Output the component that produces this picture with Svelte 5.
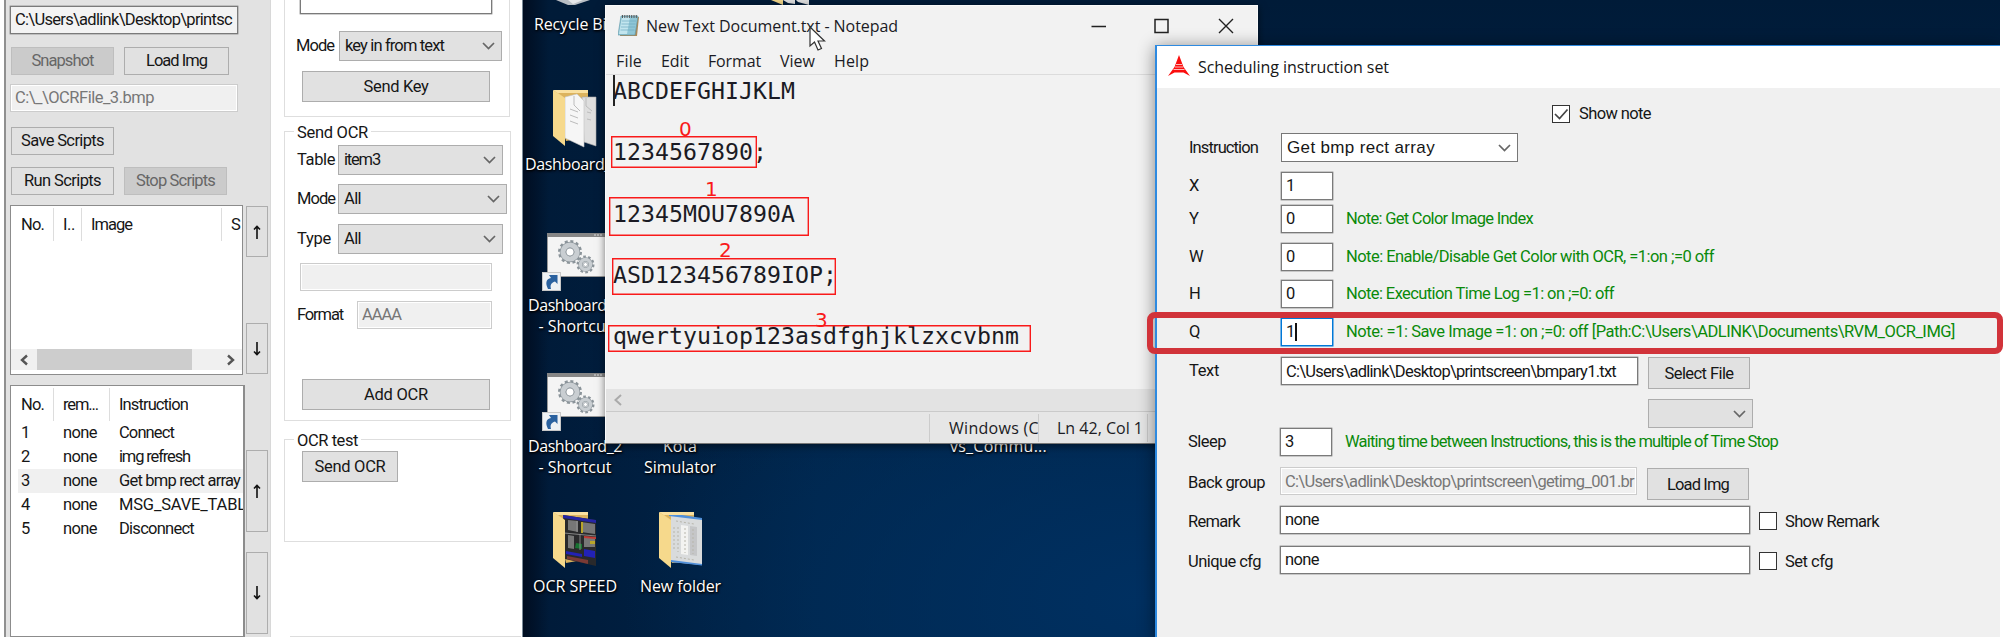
<script>
  // Spreads letter spacing so a caption takes up exactly the given width.
  function fit(node, width) {
    if (!width) return;
    const natural = node.getBoundingClientRect().width;
    node.style.letterSpacing = `${(width - natural) / node.textContent.length}px`;
  }

  const steps = [
    { name: 'Connect', w: 55 },
    { name: 'img refresh', w: 71 },
    { name: 'Get bmp rect array', w: 121 },
    { name: 'MSG_SAVE_TABL', w: 127 },
    { name: 'Disconnect', w: 75 }
  ];

  const params = [
    { key: 'X', value: '1', note: '', w: 0 },
    { key: 'Y', value: '0', note: 'Note: Get Color Image Index', w: 187 },
    { key: 'W', value: '0', note: 'Note: Enable/Disable Get Color with OCR, =1:on ;=0 off', w: 368 },
    { key: 'H', value: '0', note: 'Note: Execution Time Log =1: on ;=0: off', w: 268 },
    {
      key: 'Q',
      value: '1',
      note: 'Note: =1: Save Image =1: on ;=0: off [Path:C:\\Users\\ADLINK\\Documents\\RVM_OCR_IMG]',
      w: 609
    }
  ];

  const lines = [
    { text: 'ABCDEFGHIJKLM', w: 182 },
    { text: '1234567890;', w: 154 },
    { text: '12345MOU7890A', w: 182 },
    { text: 'ASD123456789IOP;', w: 224 },
    { text: 'qwertyuiop123asdfghjklzxcvbnm', w: 406 }
  ];
</script>

{#snippet t(text, w)}<span class="t" use:fit={w}>{text}</span>{/snippet}

{#snippet chevron()}
  <svg class="chev" width="13" height="8" viewBox="0 0 13 8"><path d="M1 1 L6.5 6.5 L12 1" fill="none" stroke="#666" stroke-width="1.7" /></svg>
{/snippet}

{#snippet combo(text, w, cls)}
  <div class="combo {cls}">{@render t(text, w)}{@render chevron()}</div>
{/snippet}

{#snippet arrow(cls, down)}
  <button class="arrow {cls}" aria-label={down ? 'Down' : 'Up'}>
    <svg width="8" height="14" viewBox="0 0 8 14">
      <path d={down ? 'M4 0V12M1 9.5L4 12.5L7 9.5' : 'M4 14V2M1 4.5L4 1.5L7 4.5'} fill="none" stroke="#111" stroke-width="1.6" />
    </svg>
  </button>
{/snippet}

{#snippet folder(kind)}
  <svg width="46" height="60" viewBox="0 0 46 60">
    <path d="M1 1H35V48L13 52Z" fill="#dcb35d" />
    {#if kind === 'docs'}
      <path d="M29 8L43 8V57L31 53Z" fill="#dedede" stroke="#aaa" stroke-width=".6" />
      <path d="M12 8L24 5L31 12V58L12 49Z" fill="#f6f6f6" stroke="#c4c4c4" stroke-width=".6" />
      <path d="M17 20L25 23M17 26L25 29M17 32L25 35M34 23L38 24M34 30L38 31M21 7V16L27 22M33 9V17L39 22" fill="none" stroke="#bcbcbc" />
    {:else if kind === 'shots'}
      <path d="M10 4L43 9V55L12 48Z" fill="#29292b" />
      <path d="M10 4L43 9V12L10 7Z" fill="#2525a5" />
      <path d="M15 9L25 10V21L15 19ZM28 11L42 13V23L28 21ZM15 24L21 25V38L15 37ZM31 26L42 27V36L31 36Z" fill="#777" />
      <path d="M28 11H30V22H28ZM37 30H42V33H37Z" fill="#b8a52a" />
      <path d="M31 25L43 26V28L31 27Z" fill="#c13b35" />
      <path d="M23 32L29 33V38L22 37Z" fill="#187332" />
      <path d="M13 40L29 43V46L13 43ZM31 38L42 40V47L31 45Z" fill="#2222b5" />
      <path d="M14 45L35 49V53L14 48Z" fill="#7a3a35" />
      <path d="M24 10V21M27 23V39M11 22L43 25" stroke="#9a9a9a" stroke-width=".8" />
    {:else}
      <path d="M12 4L43 8V54L12 51Z" fill="#d9dbdc" />
      <path d="M10 2L43 7V9L10 5ZM12 49L43 53V54.500L12 51Z" fill="#4f8fda" />
      <path d="M22 14L29 15V44L22 43Z" fill="#f3f3f1" />
      <path d="M31 15L38 16V45L31 44Z" fill="#c5c6c8" />
      <path d="M17 10L35 13M15 16V40M19 16V41M17 46L35 49M26 17V42M34 18V43" stroke="#b7b5ab" stroke-dasharray="2 2" />
    {/if}
    <path d="M0 1L12 9V57L0 47Z" fill="#f6d98c" />
    <path d="M0 1H35V4H5L12 9" fill="#f9e0a0" />
  </svg>
{/snippet}

{#snippet shortcut()}
  <svg width="64" height="60" viewBox="0 0 64 60">
    <rect x="5.500" y=".5" width="60" height="43" fill="#f4f4f4" stroke="#999" />
    <rect x="5" y="0" width="60" height="4" fill="#868686" />
    <path d="M52 2H60" stroke="#ddd" stroke-dasharray="2 1" />
    <circle cx="28" cy="19" r="10" fill="none" stroke="#8b949a" stroke-width="4" stroke-dasharray="2.800 2.436" />
    <circle cx="28" cy="19" r="7" fill="none" stroke="#8b949a" stroke-width="6.500" />
    <circle cx="28" cy="19" r="7" fill="none" stroke="#c9ced2" stroke-width="5.200" />
    <circle cx="28" cy="19" r="4" fill="#fff" stroke="#8e979d" stroke-width=".8" />
    <circle cx="43.500" cy="31.500" r="7.500" fill="none" stroke="#8b949a" stroke-width="3" stroke-dasharray="2.500 2.212" />
    <circle cx="43.500" cy="31.500" r="5" fill="none" stroke="#8b949a" stroke-width="4.500" />
    <circle cx="43.500" cy="31.500" r="5" fill="none" stroke="#c9ced2" stroke-width="3.400" />
    <circle cx="43.500" cy="31.500" r="2" fill="#fff" stroke="#8e979d" stroke-width=".7" />
    <rect x=".5" y="39.500" width="18" height="18" fill="#eef1f4" stroke="#c7c7c7" />
    <path d="M6 56C3 50 4 46 9 45L7 42H15.500V51L13 48.500C9 50 8 52 9 56Z" fill="#2a619f" />
  </svg>
{/snippet}

<div class="screen">
  <aside class="scripts">
    <div class="field path">{@render t('C:\\Users\\adlink\\Desktop\\printsc', 217)}</div>
    <div class="brow r1">
      <button class="off">{@render t('Snapshot', 62)}</button>
      <button class="wide">{@render t('Load Img', 61)}</button>
    </div>
    <div class="field path gray">{@render t('C:\\_\\OCRFile_3.bmp', 139)}</div>
    <div class="brow r2"><button>{@render t('Save Scripts', 83)}</button></div>
    <div class="brow r3">
      <button>{@render t('Run Scripts', 77)}</button>
      <button class="off">{@render t('Stop Scripts', 79)}</button>
    </div>
    <div class="listrow">
      <div class="list images">
        <div class="head">
          <div class="c1">{@render t('No.', 23)}</div>
          <div class="ci">{@render t('I..', 12)}</div>
          <div class="cimg">{@render t('Image', 41)}</div>
          <div class="cs">{@render t('S', 0)}</div>
        </div>
        <div class="hscroll">
          <svg width="10" height="12" viewBox="0 0 10 12"><path d="M8 1.500L3 6L8 10.500" fill="none" stroke="#555" stroke-width="2.400" /></svg>
          <div class="thumb"></div>
          <svg width="10" height="12" viewBox="0 0 10 12"><path d="M2 1.500L7 6L2 10.500" fill="none" stroke="#555" stroke-width="2.400" /></svg>
        </div>
      </div>
      <div class="arrows top">{@render arrow('short', false)}{@render arrow('short', true)}</div>
    </div>
    <div class="listrow second">
      <div class="list steps">
        <div class="head">
          <div class="c1">{@render t('No.', 23)}</div>
          <div class="cr">{@render t('rem...', 35)}</div>
          <div class="cn">{@render t('Instruction', 69)}</div>
        </div>
        {#each steps as s, i}
          <div class="step" class:sel={i === 2}>
            <div class="s1">{i + 1}</div>
            <div class="s2">{@render t('none', 34)}</div>
            <div class="s3">{@render t(s.name, s.w)}</div>
          </div>
        {/each}
      </div>
      <div class="arrows low">{@render arrow('tall', false)}{@render arrow('tall', true)}</div>
    </div>
  </aside>

  <section class="send">
    <div class="group keys">
      <div class="field memo"></div>
      <div class="frow key"><label>{@render t('Mode', 38)}</label>{@render combo('key in from text', 99, 'ck')}</div>
      <button class="big">{@render t('Send Key', 65)}</button>
    </div>
    <div class="group ocr">
      <div class="legend">{@render t('Send OCR', 71)}</div>
      <div class="frow f1"><label>{@render t('Table', 38)}</label>{@render combo('item3', 36, '')}</div>
      <div class="frow f2"><label>{@render t('Mode', 38)}</label>{@render combo('All', 17, 'more')}</div>
      <div class="frow f3"><label>{@render t('Type', 34)}</label>{@render combo('All', 17, '')}</div>
      <div class="field gray blank"></div>
      <div class="frow fmt"><label>{@render t('Format', 46)}</label><div class="field gray aaaa">{@render t('AAAA', 39)}</div></div>
      <button class="big add">{@render t('Add OCR', 64)}</button>
    </div>
    <div class="group test">
      <div class="legend">{@render t('OCR test', 61)}</div>
      <button class="ocrbtn">{@render t('Send OCR', 71)}</button>
    </div>
    <div class="nextgroup"></div>
  </section>

  <main class="desktop">
    <div class="item bin"><svg width="40" height="6" viewBox="0 0 40 6"><path d="M3 0H37L22 5L15 5Z" fill="#b8bec4" /><path d="M15 0H30L20 4Z" fill="#e6e8ea" /></svg></div>
    <div class="item lbl bint">{@render t('Recycle Bin', 82)}</div>
    <div class="item topf"><svg width="40" height="6" viewBox="0 0 40 6"><path d="M0 0H12V5Z" fill="#eed287" /><path d="M12 0H24V4L17 3ZM25 0H38V5L27 2Z" fill="#ddd" /></svg></div>
    <div class="item fd1">{@render folder('docs')}</div>
    <div class="item lbl fd1t">{@render t('Dashboard_', 86)}</div>
    <div class="item sc1">{@render shortcut()}</div>
    <div class="item lbl sc1t">{@render t('Dashboard_1', 94)}<br />{@render t('- Shortcut', 73)}</div>
    <div class="item sc2">{@render shortcut()}</div>
    <div class="item lbl sc2t">{@render t('Dashboard_2', 94)}<br />{@render t('- Shortcut', 73)}</div>
    <div class="item lbl kota">{@render t('Kota', 34)}<br />{@render t('Simulator', 72)}</div>
    <div class="item lbl vs">{@render t('vs_Commu...', 97)}</div>
    <div class="item fd2">{@render folder('shots')}</div>
    <div class="item lbl fd2t">{@render t('OCR SPEED', 84)}</div>
    <div class="item fd3">{@render folder('paper')}</div>
    <div class="item lbl fd3t">{@render t('New folder', 81)}</div>

    <div class="notepad">
      <div class="ntitle">
        <svg width="22" height="24" viewBox="0 0 22 24">
          <path d="M4 3H21L19 22H2Z" fill="#a9895a" />
          <path d="M3 2H20L17 21H0Z" fill="#8fc6d6" stroke="#5b93a5" stroke-width=".6" />
          <path d="M4 3H12L9 20H1Z" fill="#c2e5ee" />
          <path d="M4 7H18M3.500 10H17.500M3 13H17M2.500 16H16.500" stroke="#6fabc0" stroke-width=".7" />
          <path d="M4 2.500H20" stroke="#555" stroke-width="3" stroke-dasharray="1 1.300" />
        </svg>
        {@render t('New Text Document.txt - Notepad', 252)}
        <div class="wbtns">
          <svg width="143" height="16" viewBox="0 0 143 16">
            <path d="M.5 8.500H15M128 1L142 15M142 1L128 15" stroke="#222" stroke-width="1.400" />
            <rect x="64" y="1.500" width="13" height="13" fill="none" stroke="#222" stroke-width="1.500" />
          </svg>
        </div>
      </div>
      <div class="menu">
        {@render t('File', 26)}{@render t('Edit', 28)}{@render t('Format', 53)}{@render t('View', 35)}{@render t('Help', 35)}
      </div>
      <div class="doc">
        {#each lines as l}<div class="ln">{@render t(l.text, l.w)}</div>{/each}
        <i class="caret"></i>
      </div>
      <div class="nscroll"><svg width="10" height="12" viewBox="0 0 10 12"><path d="M8 1L2.500 6L8 11" fill="none" stroke="#aaa" stroke-width="2" /></svg></div>
      <div class="status">
        <div class="enc">{@render t('Windows (C', 90)}</div>
        <div class="pos">{@render t('Ln 42, Col 1', 86)}</div>
      </div>
      <div class="mark m0"><b>0</b></div>
      <div class="mark m1"><b>1</b></div>
      <div class="mark m2"><b>2</b></div>
      <div class="mark m3"><b>3</b></div>
      <svg class="cursor" width="17" height="26" viewBox="0 0 17 26"><path d="M1 1V20L5.500 16L9 24L12.500 22.500L9 15H15.500Z" fill="#fff" stroke="#333" stroke-width="1.200" /></svg>
    </div>

    <div class="dialog">
      <div class="dtitle">
        <svg width="22" height="22" viewBox="0 0 22 22">
          <path d="M11 0L15.500 12L22 21L15.500 17.500H6.500L0 21L6.500 12Z" fill="#fb0d0d" />
          <path d="M8 9.500H14M7 12H15M5.500 14.500H16.500" stroke="#ffb9b9" />
        </svg>
        {@render t('Scheduling instruction set', 191)}
      </div>
      <div class="form">
        <div class="show"><i class="box"><svg width="16" height="16" viewBox="0 0 16 16"><path d="M2 8L6.500 12.500L14.500 3.500" fill="none" stroke="#444" stroke-width="1.700" /></svg></i>{@render t('Show note', 72)}</div>
        <div class="row instr"><label>{@render t('Instruction', 69)}</label>{@render combo('Get bmp rect array', 148, 'pick')}</div>
        {#each params as p}
          <div class="row p{p.key}">
            <label>{p.key}</label>
            <div class="field num" class:focus={p.key === 'Q'}>{p.value}</div>
            {#if p.note}<div class="note">{@render t(p.note, p.w)}</div>{/if}
          </div>
        {/each}
        <div class="row text">
          <label>{@render t('Text', 30)}</label>
          <div class="field long">{@render t('C:\\Users\\adlink\\Desktop\\printscreen\\bmpary1.txt', 330)}</div>
          <button>{@render t('Select File', 69)}</button>
        </div>
        <div class="row dd">{@render combo('', 0, '')}</div>
        <div class="row sleep">
          <label>{@render t('Sleep', 38)}</label>
          <div class="field num">3</div>
          <div class="note">{@render t('Waiting time between Instructions, this is the multiple of Time Stop', 433)}</div>
        </div>
        <div class="row back">
          <label>{@render t('Back group', 77)}</label>
          <div class="field gray long">{@render t('C:\\Users\\adlink\\Desktop\\printscreen\\getimg_001.br', 349)}</div>
          <button>{@render t('Load Img', 62)}</button>
        </div>
        <div class="row remark">
          <label>{@render t('Remark', 52)}</label>
          <div class="field full">{@render t('none', 34)}</div>
          <i class="box"></i>{@render t('Show Remark', 94)}
        </div>
        <div class="row unique">
          <label>{@render t('Unique cfg', 73)}</label>
          <div class="field full">{@render t('none', 34)}</div>
          <i class="box"></i>{@render t('Set cfg', 48)}
        </div>
      </div>
    </div>
  </main>
  <div class="highlight"></div>
</div>

<style>
  :global(body) { margin: 0; background: #fff; }
  * { box-sizing: border-box; }
  .screen {
    position: relative; display: flex; width: 2003px; height: 637px; overflow: hidden; background: #fff;
    font: 16.500px/20px Roboto, "Liberation Sans", sans-serif; color: #161616;
  }
  .t { display: inline-block; white-space: pre; flex: none; }
  button {
    font: inherit; color: inherit; margin: 0; padding: 0; background: #e1e1e1; border: 1.500px solid #adadad;
    display: flex; align-items: center; justify-content: center; border-radius: 0;
  }
  .field { background: #fff; border: 1px solid #7a7a7a; box-shadow: 0 0 0 .4px #8a8a8a; height: 28px; display: flex; align-items: center; overflow: hidden; padding-left: 4px; flex: none; }
  .field.gray { background: #f0f0f0; border-color: #ccc; box-shadow: inset 0 0 0 1px #fff; color: #777; }
  .combo { display: flex; align-items: center; justify-content: space-between; background: #e1e1e1; border: 1px solid #adadad; height: 30px; width: 165px; padding: 0 6px 0 5px; flex: none; }
  label { flex: none; }

  /* scripts panel */
  .scripts { width: 266px; margin-left: 4px; border-left: 2px solid #909090; background: #e2e2e2; padding: 6px 0 0 4px; flex: none; height: 637px; }
  .path { width: 228px; background: #f3f3f3; }
  .brow { display: flex; gap: 10px; padding-left: 1px; }
  .brow button { width: 103px; height: 28px; }
  .brow .wide { width: 105px; }
  .brow .off { background: #cbcbcb; border-color: #bebebe; color: #666; }
  .r1 { margin: 13px 0 9px; }
  .r2 { margin-top: 15px; }
  .r3 { margin-top: 12px; }
  .listrow { display: flex; gap: 3px; margin-top: 10px; height: 170px; }
  .second { height: 252px; }
  .list { background: #fff; border: 1.500px solid #8c8c8c; overflow: hidden; display: flex; flex-direction: column; flex: none; }
  .images { width: 233px; }
  .steps { width: 235px; border-right-width: 2px; margin-right: -2px; }
  .head { display: flex; height: 33px; margin-top: 2px; line-height: 34px; flex: none; }
  .head > div { border-right: 1px solid #ddd; padding-left: 9px; flex: none; overflow: hidden; }
  .head .c1 { width: 43px; padding-left: 10px; }
  .head .ci { width: 28px; }
  .head .cimg { width: 140px; }
  .head .cs, .head .cn { border: 0; }
  .head .cr { width: 56px; }
  .hscroll { margin-top: auto; height: 21px; margin-bottom: 4px; display: flex; align-items: center; background: #f0f0f0; padding: 0 6px 0 8px; }
  .hscroll .thumb { background: #cdcdcd; width: 155px; height: 21px; margin: 0 auto 0 8px; }
  .step { display: flex; height: 24px; line-height: 24px; margin-left: 7px; padding-left: 3px; flex: none; }
  .step.sel { background: #f0f0f0; }
  .step > div { flex: none; }
  .s1 { width: 42px; }
  .s2 { width: 56px; }
  .arrows { display: flex; flex-direction: column; }
  .arrow { width: 22px; }
  .top { padding-top: 1px; gap: 66px; }
  .short { height: 51px; }
  .low { padding-top: 65px; gap: 20px; }
  .tall { height: 82px; }

  /* send panel */
  .send { width: 252px; height: 637px; border-left: 1px solid #d8d8d8; background: #fff; flex: none; display: flex; flex-direction: column; padding-left: 13px; }
  .group { border: 1.500px solid #dedede; width: 227px; flex: none; }
  .keys { height: 117px; border-top: 0; width: 226px; }
  .memo { width: 192px; height: 14px; border-top: 0; margin-left: 15px; }
  .frow { display: flex; align-items: center; padding-left: 12px; }
  .frow label { width: 41px; }
  .key { margin-top: 17px; padding-left: 11px; }
  .key label { width: 43px; }
  .ck { width: 163px; }
  .more { width: 169px; }
  .big { width: 188px; height: 31px; margin: 10px 0 0 17px; }
  .ocr { height: 290px; margin-top: 14px; }
  .legend { width: fit-content; background: #fff; margin: -9px 0 0 9px; padding: 0 3px; height: 19px; }
  .f1 { margin-top: 3px; }
  .f2 { margin-top: 9px; }
  .f3 { margin-top: 10px; }
  .blank { width: 192px; margin: 9px 0 0 15px; }
  .fmt { margin-top: 10px; }
  .fmt label { width: 60px; }
  .aaaa { width: 135px; }
  .add { margin-top: 50px; }
  .test { height: 103px; margin-top: 18px; }
  .ocrbtn { width: 96px; height: 31px; margin: 1px 0 0 17px; }
  .nextgroup { margin: auto 0 0 6px; height: 1px; background: #ddd; width: 231px; flex: none; }

  /* desktop */
  .desktop {
    position: relative; width: 1478px; height: 637px; overflow: hidden; flex: none; border-left: 1px solid #7b8b99;
    background:
      linear-gradient(90deg, #000d20 0, rgba(0, 13, 32, 0) 26px),
      radial-gradient(ellipse 520px 300px at 620px 600px, #003061 0%, rgba(0, 45, 92, 0) 100%),
      linear-gradient(#001b38 0, rgba(0, 27, 56, .6) 30%, rgba(0, 27, 56, 0) 75%),
      linear-gradient(90deg, #001a38 0, #00264c 20%, #002a55 100%);
  }
  .item { position: absolute; line-height: 0; }
  .lbl { font: 16px/20.500px "Open Sans", "Noto Sans", sans-serif; color: #fff; text-align: center; text-shadow: 1px 1px 2px #000, 0 1px 3px #000; white-space: nowrap; }
  .bin { left: 30px; top: 0; }
  .bint { left: 11px; top: 14px; }
  .topf { left: 248px; top: 0; }
  .fd1 { left: 30px; top: 89px; }
  .fd1t { left: 2px; top: 154px; }
  .sc1 { left: 19px; top: 233px; }
  .sc1t { left: 5px; top: 295px; }
  .sc2 { left: 19px; top: 373px; }
  .sc2t { left: 5px; top: 436px; }
  .kota { left: 121px; top: 436px; }
  .vs { left: 427px; top: 436px; }
  .fd2 { left: 30px; top: 511px; }
  .fd2t { left: 10px; top: 576px; }
  .fd3 { left: 136px; top: 511px; }
  .fd3t { left: 117px; top: 576px; }

  /* notepad */
  .notepad {
    position: absolute; left: 82px; top: 5px; width: 653px; height: 439px; background: #f2f2f2; border: 1px solid #fafafa; border-bottom-color: #777;
    display: flex; flex-direction: column; box-shadow: 0 2px 8px #0008; font: 16px/20px "Open Sans", "Noto Sans", sans-serif; color: #1b1b24;
  }
  .ntitle { display: flex; align-items: center; height: 40px; padding-left: 12px; flex: none; }
  .ntitle > svg { margin-right: 6px; }
  .wbtns { margin-left: 193px; margin-top: -1px; line-height: 0; }
  .menu { display: flex; gap: 19px; height: 29px; padding: 5px 0 0 10px; border-bottom: 1.500px solid #dcdcdc; flex: none; box-sizing: border-box; }
  .doc { position: relative; flex: 1; padding-left: 7px; font: 23.200px/61px "DejaVu Sans Mono", monospace; margin-top: -15px; }
  .doc .ln { height: 61.300px; }
  .doc .caret { position: absolute; left: 7px; top: 15px; width: 1.500px; height: 31px; background: #222; }
  .nscroll { height: 23px; background: #e3e3e3; border-bottom: 1px solid #cacaca; padding: 5px 7px; flex: none; line-height: 0; }
  .status { height: 31px; background: #e6e6e6; display: flex; flex: none; padding: 2px 0 1px 323px; line-height: 29px; }
  .enc { width: 110px; border-left: 1px solid #ccc; border-right: 1px solid #ccc; padding-left: 19px; overflow: hidden; }
  .pos { width: 109px; border-right: 1px solid #ccc; padding-left: 18px; }
  .mark { position: absolute; box-shadow: inset 0 0 0 1.400px #f91a1a; }
  .mark b { position: absolute; font: 20px/20px "DejaVu Sans", sans-serif; font-weight: 400; color: #f91a1a; }
  .m0 { left: 5px; top: 130px; width: 146px; height: 32px; }
  .m1 { left: 3px; top: 191px; width: 200px; height: 39px; }
  .m2 { left: 6px; top: 252px; width: 224px; height: 37px; }
  .m3 { left: 2px; top: 319px; width: 423px; height: 27px; }
  .m0 b { left: 68px; bottom: 29px; }
  .m1 b { left: 96px; bottom: 37px; }
  .m2 b { left: 107px; bottom: 35px; }
  .m3 b { left: 207px; bottom: 22px; }
  .cursor { position: absolute; left: 203px; top: 20px; }

  /* scheduling dialog */
  .dialog { position: absolute; left: 632px; top: 45px; width: 845px; height: 594px; background: #f0f0f0; border: 1.500px solid #2e8ae0; border-left-width: 2px; border-right: 0; box-shadow: 0 2px 16px #0007; }
  .dtitle { background: #fff; height: 42px; display: flex; align-items: center; padding-left: 11px; gap: 8px; font: 16px/20px "Open Sans", "Noto Sans", sans-serif; }
  .dtitle svg { margin-top: -3px; }
  .form { padding: 17px 0 0 32px; }
  .show { display: flex; gap: 9px; align-items: center; height: 18px; margin-left: 363px; }
  .box { width: 18px; height: 18px; border: 1.500px solid #333; background: #fff; flex: none; line-height: 0; display: block; }
  .row { display: flex; align-items: center; height: 28px; }
  .row label { width: 92px; }
  .row.instr { margin-top: 10px; height: 29px; }
  .pick { width: 237px; height: 29px; background: #fff; border-color: #777; font: 17px/20px "Liberation Sans", Arial, sans-serif; }
  .num { width: 52px; }
  .note { margin-left: 13px; color: #0a8a0a; }
  .pX { margin-top: 10px; }
  .pY { margin-top: 5px; }
  .pW { margin-top: 10px; }
  .pH { margin-top: 9px; }
  .pQ { margin-top: 10px; }
  .focus { border-color: #0078d7; box-shadow: 0 0 0 .5px #0078d7; }
  .focus::after { content: ""; width: 1.500px; height: 18px; background: #111; }
  .row.text { margin-top: 11px; height: 32px; align-items: flex-start; line-height: 27px; }
  .long { width: 357px; }
  .row button { width: 102px; height: 32px; margin-left: 10px; flex: none; }
  .row.dd { margin-top: 10px; height: 29px; padding-left: 459px; }
  .dd .combo { width: 105px; height: 29px; }
  .sleep, .back, .remark, .unique { position: relative; left: -1px; }
  .row.back { margin-top: 11px; height: 33px; align-items: flex-start; line-height: 27px; }
  .back label { padding-top: 2px; }
  .back button { margin-top: 1px; }
  .row.remark { margin-top: 6px; }
  .row.unique { margin-top: 12px; }
  .full { width: 470px; }
  .row .box { margin: 2px 8px 0 9px; }
  .remark > label, .unique > label { padding-top: 3px; }
  .row .box + :global(.t) { margin-top: 4px; }
  .highlight { position: absolute; left: 1147px; top: 312px; width: 856px; height: 42px; border: 6px solid #d1333a; border-radius: 8px; }
</style>
